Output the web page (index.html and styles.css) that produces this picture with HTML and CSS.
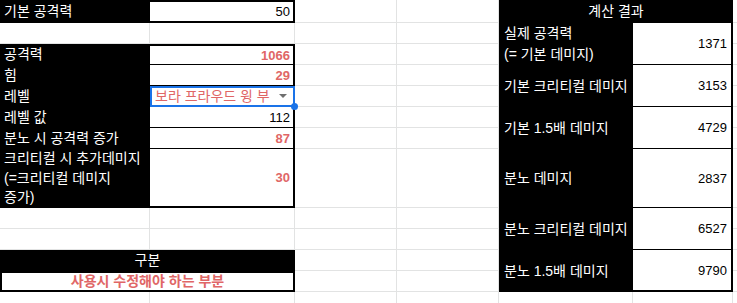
FILE: index.html
```html
<!DOCTYPE html>
<html lang="ko">
<head>
<meta charset="utf-8">
<title>계산 시트</title>
<link rel="stylesheet" href="styles.css">
</head>
<body>
<div class="frame">
<div class="sheet">
  <!-- left block -->
  <div class="cell lab ca r1">기본 공격력</div>
  <div class="cell val cb r1 box-top box-bottom">50</div>

  <div class="cell lab ca r3">공격력</div>
  <div class="cell val cb r3 box-top red">1066</div>
  <div class="cell lab ca r4">힘</div>
  <div class="cell val cb r4 red">29</div>
  <div class="cell lab ca r5">레벨</div>
  <div class="cell val cb r5 sel">
    <span class="dd-text">보라 프라우드 윙 부</span>
    <span class="dd-arrow"></span>
    <span class="handle"></span>
  </div>
  <div class="cell lab ca r6">레벨 값</div>
  <div class="cell val cb r6">112</div>
  <div class="cell lab ca r7">분노 시 공격력 증가</div>
  <div class="cell val cb r7 red">87</div>
  <div class="cell lab ca r8 multi">크리티컬 시 추가데미지<br>(=크리티컬 데미지<br>증가)</div>
  <div class="cell val cb r8 box-bottom red">30</div>

  <div class="cell lab center cab r11">구분</div>
  <div class="cell note cab r12">사용시 수정해야 하는 부분</div>

  <!-- right block -->
  <div class="cell lab center cef r1">계산 결과</div>
  <div class="cell lab ce r2-3 two">실제 공격력<br>(= 기본 데미지)</div>
  <div class="cell val rv cf r2-3">1371</div>
  <div class="cell lab ce r4-5">기본 크리티컬 데미지</div>
  <div class="cell val rv cf r4-5">3153</div>
  <div class="cell lab ce r6-7">기본 1.5배 데미지</div>
  <div class="cell val rv cf r6-7">4729</div>
  <div class="cell lab ce r8">분노 데미지</div>
  <div class="cell val rv cf r8">2837</div>
  <div class="cell lab ce r9-10">분노 크리티컬 데미지</div>
  <div class="cell val rv cf r9-10">6527</div>
  <div class="cell lab ce r11-12">분노 1.5배 데미지</div>
  <div class="cell val rv cf r11-12 box-bottom">9790</div>

  <!-- empty grid cells (auto-placed into the remaining slots) -->
  <div class="g"></div><div class="g"></div><div class="g"></div><div class="g"></div><div class="g"></div>
  <div class="g"></div><div class="g"></div><div class="g"></div><div class="g"></div><div class="g"></div>
  <div class="g"></div><div class="g"></div><div class="g"></div><div class="g"></div><div class="g"></div>
  <div class="g"></div><div class="g"></div><div class="g"></div><div class="g"></div><div class="g"></div>
  <div class="g"></div><div class="g"></div><div class="g"></div><div class="g"></div><div class="g"></div>
  <div class="g"></div><div class="g"></div><div class="g"></div><div class="g"></div><div class="g"></div>
  <div class="g"></div><div class="g"></div><div class="g"></div><div class="g"></div><div class="g"></div>
  <div class="g"></div><div class="g"></div><div class="g"></div><div class="g"></div><div class="g"></div>
  <div class="g"></div><div class="g"></div><div class="g"></div><div class="g"></div><div class="g"></div>
  <div class="g"></div><div class="g"></div><div class="g"></div><div class="g"></div>
</div>
</div>
</body>
</html>
```

FILE: styles.css
```css
* {
  box-sizing: border-box;
}

html,
body {
  margin: 0;
  padding: 0;
  background: #fff;
}

body {
  font-family: "Liberation Sans", Arial, "Noto Sans CJK KR", sans-serif;
  font-size: 13px;
  color: #000;
}

.frame {
  width: 737px;
  height: 303px;
  overflow: hidden;
}

.sheet {
  display: grid;
  grid-template-columns: 150px 145px 102px 102px 134px 100px 20px;
  grid-template-rows: 23px 21px 21px 21px 21px 21px 21px 59px 21px 21px 21px 21px 21px;
}

/* empty spreadsheet cells */
.g {
  border-right: 1px solid #e2e3e3;
  border-bottom: 1px solid #e2e3e3;
}

/* placement */
.ca { grid-column: 1; }
.cb { grid-column: 2; }
.cab { grid-column: 1 / 3; }
.ce { grid-column: 5; }
.cf { grid-column: 6; }
.cef { grid-column: 5 / 7; }

.r1 { grid-row: 1; }
.r3 { grid-row: 3; }
.r4 { grid-row: 4; }
.r5 { grid-row: 5; }
.r6 { grid-row: 6; }
.r7 { grid-row: 7; }
.r8 { grid-row: 8; }
.r11 { grid-row: 11; }
.r12 { grid-row: 12; }
.r2-3 { grid-row: 2 / 4; }
.r4-5 { grid-row: 4 / 6; }
.r6-7 { grid-row: 6 / 8; }
.r9-10 { grid-row: 9 / 11; }
.r11-12 { grid-row: 11 / 13; }

/* cells */
.cell {
  display: flex;
  align-items: center;
  padding: 0 4px;
  white-space: nowrap;
  overflow: hidden;
  line-height: 19px;
}

.lab {
  background: #000;
  color: #fff;
  font-size: 14px;
}

.ce {
  padding-left: 5px;
}

.center {
  justify-content: center;
}

.multi {
  line-height: 19.5px;
}

.two {
  line-height: 21px;
}

.val {
  background: #fff;
  justify-content: flex-end;
  border-right: 2px solid #000;
  border-bottom: 1px solid #000;
  padding-right: 3px;
}

.rv {
  padding-right: 4px;
}

.box-top {
  border-top: 2px solid #000;
}

.box-bottom {
  border-bottom: 2px solid #000;
}

.red {
  color: #e06666;
  font-weight: bold;
}

.note {
  justify-content: center;
  background: #fff;
  border: 2px solid #000;
  color: #e06666;
  font-weight: bold;
  font-size: 14px;
}

/* selected dropdown cell */
.sel {
  position: relative;
  z-index: 2;
  overflow: visible;
  justify-content: space-between;
  padding-left: 5px;
  padding-right: 4px;
}

.sel::before {
  content: "";
  position: absolute;
  inset: 0 -2px -1px 0;
  border: 2px solid #1a73e8;
}

.dd-text {
  color: #e06666;
  font-size: 14px;
  overflow: hidden;
  flex: 1;
}

.dd-arrow {
  width: 0;
  height: 0;
  margin-left: 4px;
  margin-right: 2px;
  border-left: 4px solid transparent;
  border-right: 4px solid transparent;
  border-top: 4px solid #6f6f6f;
}

.handle {
  position: absolute;
  right: -5px;
  bottom: -4px;
  width: 7px;
  height: 7px;
  border-radius: 50%;
  background: #1a73e8;
}
```
